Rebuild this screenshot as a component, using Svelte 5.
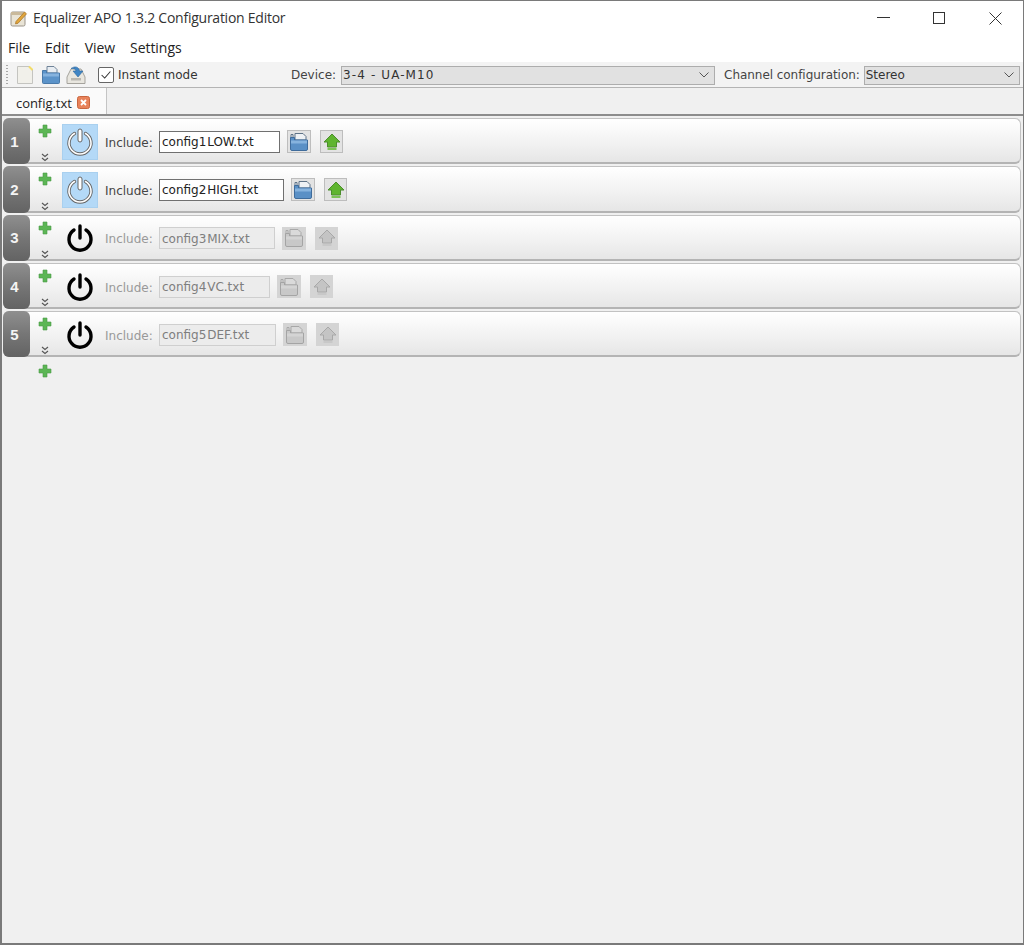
<script>
  // Include rows of the configuration
  const rows = [
    { id: 1, file: 'config1 LOW.txt', width: 121, on: true },
    { id: 2, file: 'config2 HIGH.txt', width: 125, on: true },
    { id: 3, file: 'config3 MIX.txt', width: 116, on: false },
    { id: 4, file: 'config4 VC.txt', width: 111, on: false },
    { id: 5, file: 'config5 DEF.txt', width: 117, on: false }
  ];

  const menus = ['File', 'Edit', 'View', 'Settings'];

  let instantMode = $state(true);
</script>

{#snippet plus()}
  <svg class="plus" viewBox="0 0 14 14" width="14" height="14">
    <path d="M5 1h4v4h4v4H9v4H5V9H1V5h4z" fill="#5cb655" stroke="#4b9c48" stroke-width="0.6" />
  </svg>
{/snippet}

{#snippet folder(on)}
  <svg viewBox="0 0 20 18" width="20" height="18">
    <path d="M2 5V1.500h2V5zM6 7V0.500h8l3 3V7z" fill={on ? '#eef1f4' : '#dadada'} stroke={on ? '#5f7387' : '#a8a8a8'} />
    <path d="M1.500 4.500h4v2.500h13v9a1.500 1.500 0 0 1-1.500 1.500H3a1.500 1.500 0 0 1-1.500-1.500z" fill={on ? '#5a90c6' : '#c8c8c8'} stroke={on ? '#3f6c9c' : '#a4a4a4'} />
    <path d="M2 7.500h16v3H2z" fill={on ? '#86b3de' : '#d4d4d4'} />
  </svg>
{/snippet}

{#snippet upload(on)}
  <svg viewBox="0 0 18 18" width="18" height="18">
    <path d="M9 1 17 9h-3.500v5h-9V9H1z" fill={on ? '#5fb52f' : '#c4c4c4'} stroke={on ? '#4c8e2c' : '#a8a8a8'} />
    <path d="M4.500 15h9v2h-9z" fill={on ? '#7cc455' : '#c8c8c8'} />
  </svg>
{/snippet}

<div class="window">
  <header class="titlebar">
    <svg class="app-icon" viewBox="0 0 18 18" width="18" height="18">
      <rect x="1" y="3" width="14" height="14" rx="1.500" fill="#e9e4d6" stroke="#9b948a" />
      <rect x="1" y="3" width="14" height="3" fill="#c9b99b" />
      <path d="M6 12.500 14.500 3l2 1.800-8.500 9.500-2.500.6z" fill="#e2a63c" stroke="#a26f22" stroke-width="0.7" />
    </svg>
    <span class="title">Equalizer APO 1.3.2 Configuration Editor</span>
    <div class="win-controls">
      <svg viewBox="0 0 13 13" width="13" height="13"><path d="M0 5.500h13" stroke="#333" fill="none" /></svg>
      <svg viewBox="0 0 13 13" width="13" height="13"><rect x="0.500" y="0.500" width="11" height="11" stroke="#333" fill="none" /></svg>
      <svg viewBox="0 0 13 13" width="13" height="13"><path d="M0.500 0.500l12 12M12.500 0.500l-12 12" stroke="#333" fill="none" /></svg>
    </div>
  </header>

  <nav class="menubar">
    {#each menus as menu}
      <span>{menu}</span>
    {/each}
  </nav>

  <div class="toolbar">
    <div class="grip"></div>
    <svg class="tool-new" viewBox="0 0 16 18" width="16" height="18">
      <path d="M0.500 0.500h12l3 3v14h-15z" fill="#f1f0ea" stroke="#c4c4c0" />
      <path d="M12 0.500l3.500 3.500" stroke="#f2dc6a" stroke-width="2" />
    </svg>
    <svg class="tool-open" viewBox="0 0 18 18" width="18" height="18">
      <path d="M5 7V0.500h7l3 3V7z" fill="#e8edf2" stroke="#6f8398" />
      <path d="M0.500 4.500h4v2.500h13v9.500a1 1 0 0 1-1 1h-15a1 1 0 0 1-1-1z" fill="#5b93c9" stroke="#4a7aa9" />
      <path d="M1 7.500h16v3H1z" fill="#86b3de" />
    </svg>
    <svg class="tool-save" viewBox="0 0 20 20" width="20" height="20">
      <path d="M1 18.500V12l4-8h10l4 8v6.500z" fill="#e8e6df" stroke="#a5a39d" />
      <path d="M5 13h10v2.500H5z" fill="#b9b7b0" />
      <path d="M5 3.500C9 .5 13 2 13.500 6H17l-5 6-5-6h3c0-1.500-2-3-5-2.500z" fill="#3f85c4" stroke="#2f6a9f" stroke-width="0.6" />
    </svg>
    <button class="check" class:checked={instantMode} onclick={() => (instantMode = !instantMode)} aria-label="Instant mode">
      {#if instantMode}
        <svg viewBox="0 0 16 16" width="14" height="14"><path d="M3 8l3.500 3.500L13 4" stroke="#333" stroke-width="1.200" fill="none" /></svg>
      {/if}
    </button>
    <span class="tb-label instant">Instant mode</span>
    <span class="tb-label device">Device:</span>
    <div class="select device-select">
      <span class="device-name">3-4 - UA-M10</span>
      <svg viewBox="0 0 10 6" width="10" height="6"><path d="M0.500 0.500 5 5l4.500-4.500" stroke="#555" fill="none" /></svg>
    </div>
    <span class="tb-label channel">Channel configuration:</span>
    <div class="select channel-select">
      <span>Stereo</span>
      <svg viewBox="0 0 10 6" width="10" height="6"><path d="M0.500 0.500 5 5l4.500-4.500" stroke="#555" fill="none" /></svg>
    </div>
  </div>

  <div class="tabbar">
    <div class="tab">
      <span>config.txt</span>
      <svg viewBox="0 0 13 13" width="13" height="13">
        <rect x="0.500" y="0.500" width="12" height="12" rx="2" fill="#e8825a" stroke="#c9663f" />
        <path d="M4 4l5 5M9 4l-5 5" stroke="#fff" stroke-width="1.800" />
      </svg>
    </div>
  </div>

  <main class="content">
    {#each rows as row (row.id)}
      <section class="row">
        <div class="handle">{row.id}</div>
        <div class="add-col">
          {@render plus()}
          <svg viewBox="0 0 8 9" width="8" height="9"><path d="M1 1l3 2.500L7 1M1 5l3 2.500L7 5" stroke="#555" stroke-width="1.100" fill="none" /></svg>
        </div>
        <button class="power" class:on={row.on} aria-label="Toggle include {row.id}">
          {#if row.on}
            <svg viewBox="0 0 30 30" width="30" height="30">
              <path d="M9.500 6.500a11 11 0 1 0 11 0" fill="none" stroke="#666" stroke-width="3.400" stroke-linecap="round" />
              <path d="M9.500 6.500a11 11 0 1 0 11 0" fill="none" stroke="#fff" stroke-width="1.600" stroke-linecap="round" />
              <rect x="13" y="2" width="4" height="13" rx="2" fill="#fff" stroke="#666" />
            </svg>
          {:else}
            <svg viewBox="0 0 30 30" width="30" height="30">
              <path d="M9 7a11 11 0 1 0 12 0" fill="none" stroke="#000" stroke-width="3.400" stroke-linecap="round" />
              <path d="M15 3v12" stroke="#000" stroke-width="3.400" stroke-linecap="round" />
            </svg>
          {/if}
        </button>
        <span class="inc" class:off={!row.on}>Include:</span>
        <input class="file" class:off={!row.on} style="width: {row.width}px" value={row.file} disabled={!row.on} />
        <button class="icon-btn folder" class:off={!row.on} aria-label="Open file">{@render folder(row.on)}</button>
        <button class="icon-btn upload" class:off={!row.on} aria-label="Edit file">{@render upload(row.on)}</button>
      </section>
    {/each}
    <div class="add-last">{@render plus()}</div>
  </main>
</div>

<style>
  :global(body) {
    margin: 0;
    background: #f0f0f0;
  }

  .window {
    box-sizing: border-box;
    height: 945px;
    display: flex;
    flex-direction: column;
    border: 1px solid #7a7a7a;
    border-left-width: 2px;
    border-bottom-width: 2px;
    background: #f0f0f0;
    overflow: hidden;
    font-family: 'Noto Sans', 'Open Sans', sans-serif;
    color: #333;
  }

  .titlebar {
    box-sizing: border-box;
    height: 35px;
    display: flex;
    align-items: center;
    background: #fff;
    padding: 0 0 1px 8px;
    flex: none;
  }

  .app-icon {
    margin-right: 5px;
  }

  .title {
    font-family: 'Open Sans', sans-serif;
    font-size: 14px;
    color: #333;
    letter-spacing: -0.25px;
    margin-bottom: 1px;
  }

  .win-controls {
    margin-left: auto;
    display: flex;
    gap: 43px;
    padding-right: 21px;
  }

  .menubar {
    box-sizing: border-box;
    height: 26px;
    flex: none;
    display: flex;
    gap: 15px;
    padding: 0 0 3px 6px;
    align-items: center;
    background: #fff;
    font-family: 'Open Sans', sans-serif;
    font-size: 14px;
    letter-spacing: -0.05px;
    color: #222;
  }

  .toolbar {
    height: 26px;
    flex: none;
    display: flex;
    align-items: center;
    background: #f3f3f3;
    border-bottom: 1px solid #b4b4b4;
    box-sizing: border-box;
    padding-top: 1px;
    font-family: 'DejaVu Sans', sans-serif;
  }

  .grip {
    width: 2px;
    height: 20px;
    margin-left: 4px;
    background: repeating-linear-gradient(to bottom, #a8a8a8 0 1px, transparent 1px 3px);
  }

  .tool-new {
    margin-left: 9px;
  }

  .tool-open {
    margin-left: 9px;
  }

  .tool-save {
    margin-left: 6px;
  }

  .check {
    box-sizing: border-box;
    width: 16px;
    height: 16px;
    margin: 0 0 0 12px;
    padding: 0;
    display: flex;
    align-items: center;
    justify-content: center;
    background: #fff;
    border: 1px solid #666;
    border-radius: 2px;
  }

  .tb-label {
    font-size: 12px;
    color: #444;
    white-space: nowrap;
  }

  .instant {
    margin-left: 4px;
    width: 173px;
    color: #333;
  }

  .device {
    margin-right: 5px;
  }

  .select {
    box-sizing: border-box;
    height: 19px;
    display: flex;
    align-items: center;
    justify-content: space-between;
    padding: 0 5px 0 1px;
    background: #e1e1e1;
    border: 1px solid #adadad;
    font-size: 12px;
    color: #333;
  }

  .device-select {
    width: 374px;
  }

  .device-name {
    letter-spacing: 1.1px;
  }

  .channel {
    margin-left: 9px;
    margin-right: 4px;
    letter-spacing: -0.05px;
  }

  .channel-select {
    width: 156px;
  }

  .tabbar {
    height: 28px;
    flex: none;
    display: flex;
    background: #f0f0f0;
    border-bottom: 2px solid #8c8c8c;
    box-sizing: border-box;
  }

  .tab {
    width: 105px;
    box-sizing: border-box;
    display: flex;
    align-items: center;
    gap: 5px;
    padding: 3px 0 0 14px;
    background: #fafafa;
    border-right: 1px solid #c4c4c4;
    font-size: 13px;
    letter-spacing: -0.05px;
    color: #222;
    font-family: 'Open Sans', sans-serif;
    height: 26px;
  }

  .content {
    flex: 1;
    display: flex;
    flex-direction: column;
    gap: 2px;
    padding: 2px 2px 0 1px;
  }

  .row {
    box-sizing: border-box;
    height: 46.300px;
    display: flex;
    align-items: center;
    padding-top: 2px;
    border: 1px solid #c2c2c2;
    border-left: none;
    border-bottom: 2px solid #b4b4b4;
    border-radius: 6px;
    background: linear-gradient(to bottom, #fff 0%, #f2f2f2 55%, #e6e6e6 100%);
    font-family: 'DejaVu Sans', sans-serif;
    flex: none;
  }

  .handle {
    align-self: stretch;
    width: 27px;
    margin: -3px 0 -2px;
    padding-right: 4px;
    box-sizing: border-box;
    flex: none;
    display: flex;
    align-items: center;
    justify-content: center;
    border-radius: 6px;
    background: linear-gradient(to bottom, #8f8f8f 0%, #767676 50%, #636363 100%);
    color: #f4f4f4;
    font-family: 'Liberation Sans', sans-serif;
    font-size: 15px;
    font-weight: bold;
  }

  .add-col {
    align-self: stretch;
    width: 14px;
    margin-left: 8px;
    display: flex;
    flex-direction: column;
    align-items: center;
    justify-content: space-between;
    padding: 3px 0 0;
    box-sizing: border-box;
    flex: none;
  }

  .plus {
    display: block;
  }

  .power {
    box-sizing: border-box;
    width: 36px;
    height: 36px;
    margin-left: 10px;
    padding: 0;
    display: flex;
    align-items: center;
    justify-content: center;
    background: none;
    border: 1px solid transparent;
    flex: none;
  }

  .power.on {
    background: #b4d9f7;
    border-color: #a9d0ef;
  }

  .inc {
    margin: 2px 0 0 7px;
    width: 54px;
    font-size: 12px;
    color: #444;
    flex: none;
  }

  .inc.off {
    color: #999;
  }

  .file {
    box-sizing: border-box;
    height: 22px;
    margin: 0;
    padding: 1px 2px 0;
    background: #fff;
    border: 1px solid #707070;
    font-family: 'DejaVu Sans', sans-serif;
    font-size: 12px;
    word-spacing: -3px;
    color: #222;
    outline: none;
    flex: none;
  }

  .file.off {
    background: #ececec;
    border-color: #cfcfcf;
    color: #7e7e7e;
  }

  .icon-btn {
    box-sizing: border-box;
    width: 24px;
    height: 23px;
    padding: 0;
    display: flex;
    align-items: center;
    justify-content: center;
    background: #e3e3e3;
    border: 1px solid #bdbdbd;
    flex: none;
  }

  .icon-btn.off {
    background: #d4d4d4;
    border-color: #d4d4d4;
  }

  .folder {
    margin-left: 7px;
  }

  .upload {
    width: 23px;
    margin-left: 9px;
  }

  .add-last {
    padding: 5px 0 0 35px;
  }
</style>
